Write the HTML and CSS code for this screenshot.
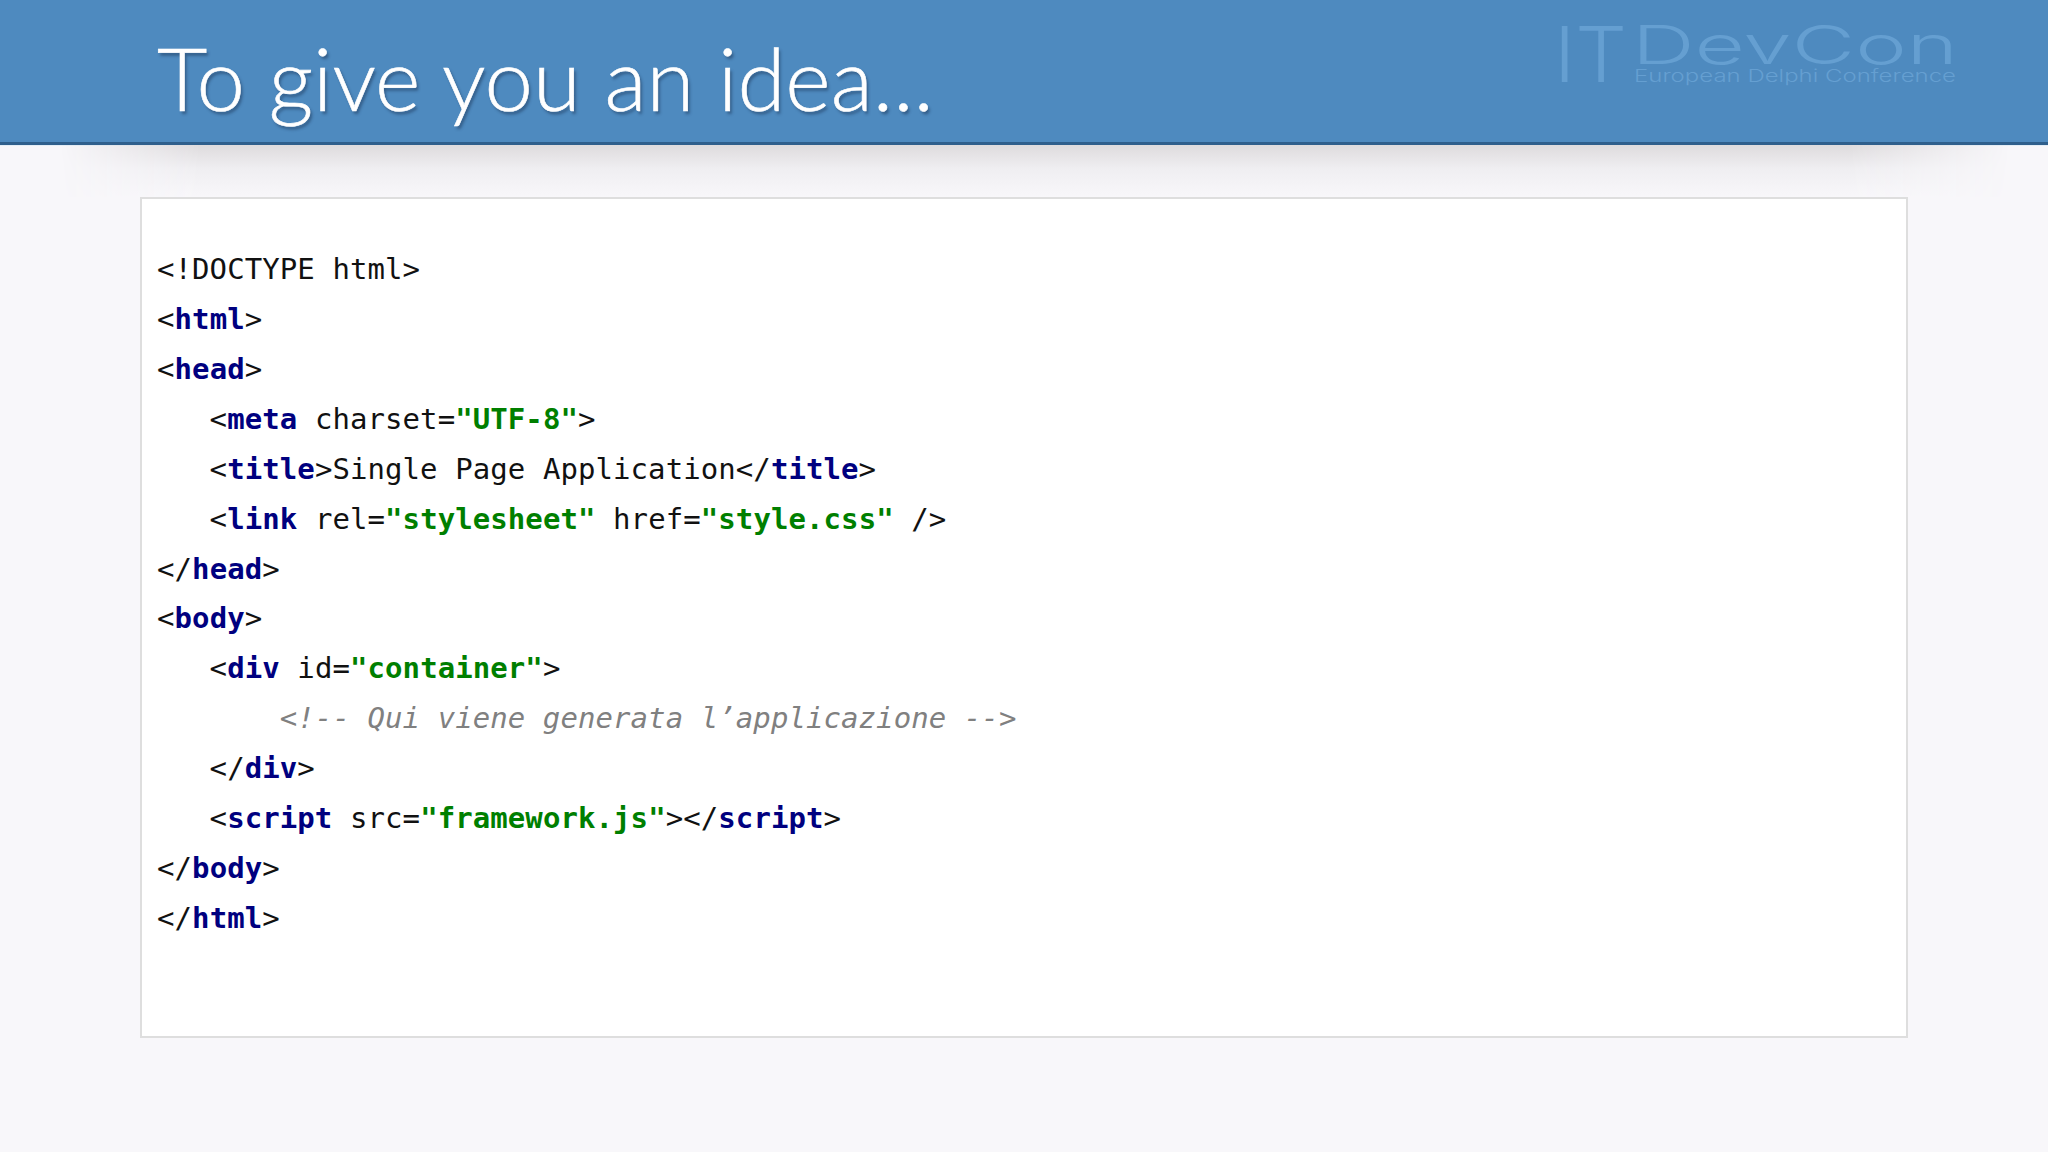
FILE: index.html
```html
<!DOCTYPE html>
<html lang="en">
<head>
<meta charset="UTF-8">
<title>To give you an idea...</title>
<link rel="stylesheet" href="styles.css">
</head>
<body>
<header class="header">
  <h1 class="title">To give you an idea...</h1>
  <svg class="logo" width="400" height="62" viewBox="0 0 400 62" aria-label="ITDevCon">
    <text class="logo-it" x="-4" y="57" textLength="73" lengthAdjust="spacingAndGlyphs">IT</text>
    <text class="logo-dev" x="74" y="39" textLength="326" lengthAdjust="spacingAndGlyphs">DevCon</text>
    <text class="logo-sub" x="76" y="57" textLength="322" lengthAdjust="spacingAndGlyphs">European Delphi Conference</text>
  </svg>
</header>
<div class="shade"></div>
<main class="panel">
<div class="code">
<div class="line">&lt;!DOCTYPE html&gt;</div>
<div class="line">&lt;<b class="tag">html</b>&gt;</div>
<div class="line">&lt;<b class="tag">head</b>&gt;</div>
<div class="line">   &lt;<b class="tag">meta</b> charset=<b class="str">"UTF-8"</b>&gt;</div>
<div class="line">   &lt;<b class="tag">title</b>&gt;Single Page Application&lt;/<b class="tag">title</b>&gt;</div>
<div class="line">   &lt;<b class="tag">link</b> rel=<b class="str">"stylesheet"</b> href=<b class="str">"style.css"</b> /&gt;</div>
<div class="line">&lt;/<b class="tag">head</b>&gt;</div>
<div class="line">&lt;<b class="tag">body</b>&gt;</div>
<div class="line">   &lt;<b class="tag">div</b> id=<b class="str">"container"</b>&gt;</div>
<div class="line">       <i class="comment">&lt;!-- Qui viene generata l’applicazione --&gt;</i></div>
<div class="line">   &lt;/<b class="tag">div</b>&gt;</div>
<div class="line">   &lt;<b class="tag">script</b> src=<b class="str">"framework.js"</b>&gt;&lt;/<b class="tag">script</b>&gt;</div>
<div class="line">&lt;/<b class="tag">body</b>&gt;</div>
<div class="line">&lt;/<b class="tag">html</b>&gt;</div>
</div>
</main>
</body>
</html>
```

FILE: styles.css
```css
* { box-sizing: border-box; }
html, body { margin: 0; height: 100%; }
body {
  width: 2048px;
  height: 1152px;
  overflow: hidden;
  background: #f8f7fa;
  display: flex;
  flex-direction: column;
}
.header {
  height: 145px;
  flex: none;
  display: flex;
  justify-content: space-between;
  align-items: flex-start;
  padding: 0 90px 0 157px;
  background: #4e8abf;
  border-bottom: 3px solid #2f5f8c;
  box-shadow: 0 1px 0 #e4eef7;
}
.title {
  margin: 23px 0 0;
  font: 300 87px/110px Lato, "Open Sans", sans-serif;
  color: #fff;
  -webkit-text-stroke: .6px #fff;
  text-shadow: 2px 3px 3px rgba(20, 40, 70, .45);
}
.logo { margin-top: 25px; overflow: visible; }
.logo-it { font: 300 77px Inter, sans-serif; fill: #659fd1; }
.logo-dev { font: 300 53px Inter, sans-serif; fill: #659fd1; }
.logo-sub { font: 300 17px Inter, sans-serif; fill: #659fd1; }
.shade {
  height: 52px;
  flex: none;
  background: linear-gradient(#dedbdd, #efeef1 45%, #f8f7fa);
  -webkit-mask-image: linear-gradient(90deg, transparent 60px, #000 200px, #000 1850px, transparent 2010px);
  mask-image: linear-gradient(90deg, transparent 60px, #000 200px, #000 1850px, transparent 2010px);
}
.panel {
  width: 1768px;
  height: 841px;
  margin-left: 140px;
  padding: 45px 0 0 15px;
  background: #fff;
  border: 2px solid #dedede;
}
.code {
  font: 29px/50px "DejaVu Sans Mono", "Liberation Mono", monospace;
  letter-spacing: .08px;
  color: #111;
}
.line { height: 49.93px; white-space: pre; }
.code b { font-weight: 700; }
.tag { color: #00007f; }
.str { color: #007f00; }
.comment { color: #808080; font-style: italic; }
```
